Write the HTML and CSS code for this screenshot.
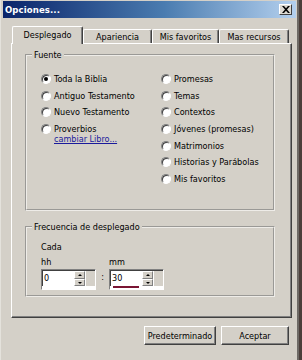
FILE: index.html
```html
<!DOCTYPE html>
<html lang="es">
<head>
    <meta charset="UTF-8">
    <title>Opciones...</title>
    <link rel="stylesheet" href="styles.css">
</head>
<body>
    <div class="window">
        <div class="titlebar">
            <span class="title">Opciones...</span>
            <span class="close">
                <svg width="8" height="7" viewBox="0 0 8 7"><path d="M0 0h2l2 2.2L6 0h2L5 3.5 8 7H6L4 4.8 2 7H0l3-3.5z" fill="#000"/></svg>
            </span>
        </div>

        <div class="content">
            <div class="tabs">
                <div class="tab selected">Desplegado</div>
                <div class="tab">Apariencia</div>
                <div class="tab">Mis favoritos</div>
                <div class="tab">Mas recursos</div>
            </div>

            <div class="panel">
                <fieldset class="group fuente">
                    <legend>Fuente</legend>
                    <div class="cols">
                        <div class="col">
                            <label class="radio-row"><span class="radio checked"></span>Toda la Biblia</label>
                            <label class="radio-row"><span class="radio"></span>Antiguo Testamento</label>
                            <label class="radio-row"><span class="radio"></span>Nuevo Testamento</label>
                            <label class="radio-row"><span class="radio"></span>Proverbios</label>
                            <a class="link" href="#">cambiar Libro...</a>
                        </div>
                        <div class="col">
                            <label class="radio-row"><span class="radio"></span>Promesas</label>
                            <label class="radio-row"><span class="radio"></span>Temas</label>
                            <label class="radio-row"><span class="radio"></span>Contextos</label>
                            <label class="radio-row"><span class="radio"></span>Jóvenes (promesas)</label>
                            <label class="radio-row"><span class="radio"></span>Matrimonios</label>
                            <label class="radio-row"><span class="radio"></span>Historias y Parábolas</label>
                            <label class="radio-row"><span class="radio"></span>Mis favoritos</label>
                        </div>
                    </div>
                </fieldset>

                <fieldset class="group freq">
                    <legend>Frecuencia de desplegado</legend>
                    <div class="freq-body">
                        <div class="caption">Cada</div>
                        <div class="spins">
                            <div class="spin-field">
                                <div class="unit">hh</div>
                                <div class="spin">
                                    <div class="spin-top">
                                        <span class="spin-value">0</span>
                                        <span class="spin-arrows">
                                            <span class="arrow up"></span>
                                            <span class="arrow down"></span>
                                        </span>
                                        <span class="spin-rest"></span>
                                    </div>
                                    <div class="spin-bottom"></div>
                                </div>
                            </div>
                            <span class="colon">:</span>
                            <div class="spin-field">
                                <div class="unit">mm</div>
                                <div class="spin">
                                    <div class="spin-top">
                                        <span class="spin-value">30</span>
                                        <span class="spin-arrows">
                                            <span class="arrow up"></span>
                                            <span class="arrow down"></span>
                                        </span>
                                        <span class="spin-rest"></span>
                                    </div>
                                    <div class="spin-bottom"><span class="mark"></span></div>
                                </div>
                            </div>
                        </div>
                    </div>
                </fieldset>
            </div>

            <div class="actions">
                <button class="btn wide">Predeterminado</button>
                <button class="btn">Aceptar</button>
            </div>
        </div>
    </div>
</body>
</html>
```

FILE: styles.css
```css
/* Windows classic dialog */
body {
    margin: 0;
    background: #4b3f3b;
    font-family: "DejaVu Sans Condensed", "Liberation Sans", sans-serif;
    font-size: 9px;
    color: #000;
}

.window {
    width: 299px;
    height: 360px;
    box-sizing: border-box;
    background: #d4d0c8;
    border-left: 1px solid #e4e2dc;
    border-right: 2px solid #6e6a66;
    padding: 1px 1px 0 2px;
}

.titlebar {
    height: 17px;
    display: flex;
    align-items: center;
    justify-content: space-between;
    padding: 0 4px 0 2px;
    background: linear-gradient(90deg, #0a246a, #4a7cb0 55%, #b4d0ee);
}

.title {
    color: #fff;
    font-weight: bold;
    font-size: 9.5px;
    letter-spacing: 0.1px;
}

.close {
    width: 11px;
    height: 9px;
    display: flex;
    align-items: center;
    justify-content: center;
    background: #dcd9d2;
    border: 1px solid;
    border-color: #fff #404040 #404040 #fff;
}

.content {
    padding: 8px 0 0 8px;
}

/* Tabs */
.tabs {
    display: flex;
    align-items: flex-end;
    height: 17px;
    padding-left: 1px;
}

.tab {
    height: 14px;
    box-sizing: border-box;
    display: flex;
    align-items: center;
    justify-content: center;
    background: #d4d0c8;
    border: 1px solid;
    border-color: #fff #404040 transparent #fff;
    box-shadow: inset -1px 0 0 #808080;
    border-bottom: none;
    border-radius: 2px 2px 0 0;
    padding-top: 1px;
}

.tab:nth-child(1) { width: 71px; }
.tab:nth-child(2) { width: 69px; }
.tab:nth-child(3) { width: 67px; }
.tab:nth-child(4) { width: 70px; }

.tab.selected {
    height: 18px;
    margin-bottom: -1px;
    position: relative;
    z-index: 1;
    padding-top: 0;
    padding-bottom: 2px;
}

.panel {
    width: 281px;
    height: 275px;
    box-sizing: border-box;
    border: 1px solid;
    border-color: #fff #404040 #404040 #fff;
    box-shadow: inset -1px -1px 0 #808080;
    padding: 6px 16px 0 13px;
}

/* Group boxes */
.group {
    margin: 0;
    padding: 0;
    min-width: 0;
    border: 2px groove #eeece8;
}

.group legend {
    margin-left: 5px;
    padding: 0 2px;
    line-height: 10px;
}

.fuente {
    height: 161px;
    box-sizing: border-box;
}

.cols {
    display: flex;
    padding: 11px 0 0 14px;
}

.col {
    display: flex;
    flex-direction: column;
}

.col:first-child {
    width: 120px;
}

.radio-row {
    height: 16.6px;
    display: flex;
    align-items: center;
    gap: 3px;
}

.radio {
    width: 10px;
    height: 10px;
    box-sizing: border-box;
    border-radius: 50%;
    background: #fff;
    border: 1px solid;
    border-color: #808080 #fff #fff #808080;
    box-shadow: inset 1px 1px 0 #404040, 0 0 0 0.5px #d4d0c8;
    display: flex;
    align-items: center;
    justify-content: center;
}

.radio.checked::after {
    content: "";
    width: 4px;
    height: 4px;
    border-radius: 50%;
    background: #000;
}

.link {
    margin: -3px 0 0 13px;
    color: #1a1a9c;
    text-decoration: underline;
}

.freq {
    margin-top: 11px;
    height: 75px;
    box-sizing: border-box;
}

.freq-body {
    padding: 9px 0 0 14px;
}

.caption {
    line-height: 12px;
}

.spins {
    display: flex;
    align-items: flex-end;
    margin-top: 3px;
}

.unit {
    line-height: 12px;
    margin-bottom: 1px;
}

.spin {
    width: 55px;
    height: 21px;
    box-sizing: border-box;
    display: flex;
    flex-direction: column;
    background: #e8e6e2;
    border: 1px solid;
    border-color: #808080 #fff #fff #808080;
}

.spin-top {
    display: flex;
    height: 15px;
    border-top: 1px solid #404040;
    border-left: 1px solid #404040;
}

.spin-value {
    width: 30px;
    background: #fff;
    line-height: 14px;
    padding-left: 1px;
}

.spin-arrows {
    width: 11px;
    display: flex;
    flex-direction: column;
    background: #fff;
}

.arrow {
    flex: 1;
    background: #d4d0c8;
    border: 1px solid;
    border-color: #fff #808080 #808080 #fff;
    position: relative;
}

.arrow::after {
    content: "";
    position: absolute;
    left: 3px;
    top: 2px;
    border-left: 2px solid transparent;
    border-right: 2px solid transparent;
}

.arrow.up::after { border-bottom: 2px solid #000; }
.arrow.down::after { border-top: 2px solid #000; top: 2px; }

.spin-rest {
    flex: 1;
    background: #d4d0c8;
    border-left: 1px solid #fff;
}

.spin-bottom {
    flex: 1;
    background: #fff;
    padding: 0 0 0 3px;
}

.mark {
    display: block;
    width: 26px;
    height: 2px;
    background: #7a1534;
}

.colon {
    width: 13px;
    text-align: center;
    margin-bottom: 8px;
}

/* Bottom buttons */
.actions {
    display: flex;
    justify-content: flex-end;
    gap: 5px;
    padding: 8px 3px 0 0;
    width: 281px;
    box-sizing: border-box;
}

.btn {
    height: 19px;
    width: 68px;
    font: inherit;
    background: #d4d0c8;
    border: 1px solid;
    border-color: #fff #404040 #404040 #fff;
    box-shadow: inset -1px -1px 0 #808080;
    padding: 0;
}

.btn.wide {
    width: 72px;
}
```
